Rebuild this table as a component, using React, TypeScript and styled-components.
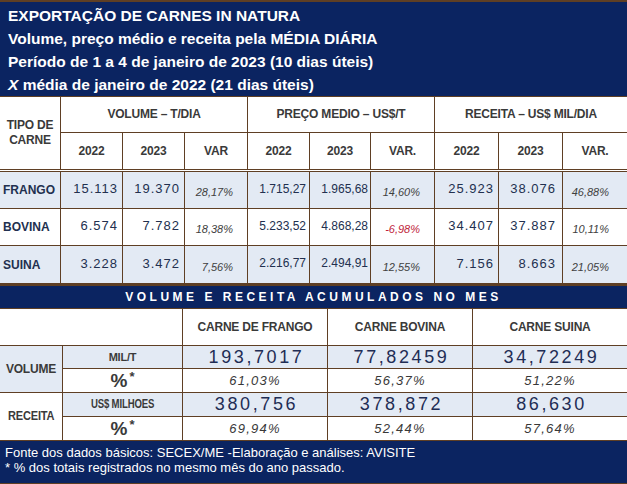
import React from 'react';
import styled, { createGlobalStyle, css } from 'styled-components';

const NAVY = '#0b2461';
const BROWN = '#5f3f24';
const BLUE = '#e3eaf4';
const HEAD = '#3a3a3a';
const INK = '#22304f';

const Global = createGlobalStyle`
  html, body { margin: 0; padding: 0; background: #fff; }
  body { font-family: "Liberation Sans", Arial, sans-serif; }
`;

const Page = styled.div`
  width: 627px;
  height: 484px;
  box-sizing: border-box;
  padding-top: 2px;
  padding-bottom: 1px;
  background: ${BROWN};
  display: flex;
  flex-direction: column;
  gap: 1px;
  overflow: hidden;
`;

const TitleBlock = styled.div`
  height: 94px;
  box-sizing: border-box;
  padding: 2px 0 0 8px;
  background: ${NAVY};
  color: #fff;
  font-weight: bold;
  font-size: 15.5px;
  line-height: 23px;
`;

const TitleLine = styled.div`
  white-space: nowrap;
`;

const Ital = styled.span`
  font-style: italic;
`;

const UpperGrid = styled.div`
  display: grid;
  grid-template-columns: 60px 61px 61px 62px 61px 60px 63px 63px 63px 64px;
  grid-template-rows: 35px 36px 1px 36px 36px 37px;
  gap: 1px;
  background: ${BROWN};
  margin-bottom: 1px;
`;

const LowerGrid = styled.div`
  display: grid;
  grid-template-columns: 62px 119px 144px 144px 154px;
  grid-template-rows: 36px 22px 23px 23px 23px;
  gap: 1px;
  background: ${BROWN};
`;

type Align = 'left' | 'center' | 'right';

const Cell = styled.div<{ $blue?: boolean; $align?: Align; $col?: string; $row?: string; $pr?: number }>`
  background: ${(p) => (p.$blue ? BLUE : '#fff')};
  display: flex;
  align-items: center;
  justify-content: ${(p) => (p.$align === 'left' ? 'flex-start' : p.$align === 'right' ? 'flex-end' : 'center')};
  padding-right: ${(p) => p.$pr ?? 0}px;
  padding-left: ${(p) => (p.$align === 'left' ? 3 : 0)}px;
  box-sizing: border-box;
  white-space: nowrap;
  ${(p) => p.$col && css`grid-column: ${p.$col};`}
  ${(p) => p.$row && css`grid-row: ${p.$row};`}
`;

const Spacer = styled.div`
  grid-column: 1 / -1;
  background: #fff;
`;

const HeadText = styled.span<{ $size?: number }>`
  font-weight: bold;
  font-size: ${(p) => p.$size ?? 12}px;
  color: ${HEAD};
  text-align: center;
  line-height: 15px;
  letter-spacing: -0.2px;
`;

const RowLabel = styled.span`
  font-weight: bold;
  font-size: 12px;
  color: ${INK};
`;

const IntNum = styled.span`
  font-size: 13px;
  letter-spacing: 1px;
  color: ${INK};
  margin-top: -3px;
`;

const PriceNum = styled.span`
  font-size: 12px;
  color: ${INK};
  margin-top: -3px;
`;

const Pct = styled.span<{ $neg?: boolean }>`
  font-size: 11px;
  font-style: italic;
  color: ${(p) => (p.$neg ? '#c0243a' : '#404040')};
  margin-top: 4px;
`;

const Band = styled.div`
  height: 22px;
  background: ${NAVY};
  color: #fff;
  font-weight: bold;
  font-size: 12px;
  letter-spacing: 3.5px;
  display: flex;
  align-items: center;
  justify-content: center;
  padding-left: 0;
  margin-top: 1px;
`;

const Squeeze = styled.span<{ $scale: number }>`
  display: inline-block;
  transform: scaleX(${(p) => p.$scale});
`;

const BigNum = styled.span`
  font-size: 18px;
  letter-spacing: 2.6px;
  color: #1f2d55;
  padding-left: 3px;
`;

const LowPct = styled.span`
  font-size: 13px;
  font-style: italic;
  letter-spacing: 1.2px;
  color: #383838;
`;

const PctMark = styled.span`
  font-weight: bold;
  font-size: 19px;
  color: ${HEAD};
  line-height: 1;
`;

const Star = styled.sup`
  font-size: 13px;
  vertical-align: 6px;
  line-height: 0;
  font-weight: bold;
  margin-left: 2px;
`;

const Footer = styled.div`
  flex: 1;
  background: ${NAVY};
  color: #fff;
  font-size: 13px;
  line-height: 15px;
  padding: 4px 0 0 5px;
`;

type Row = {
  name: string;
  blue: boolean;
  v: [string, string, string];
  p: [string, string, string];
  r: [string, string, string];
  neg?: boolean;
};

const rows: Row[] = [
  { name: 'FRANGO', blue: true, v: ['15.113', '19.370', '28,17%'], p: ['1.715,27', '1.965,68', '14,60%'], r: ['25.923', '38.076', '46,88%'] },
  { name: 'BOVINA', blue: false, v: ['6.574', '7.782', '18,38%'], p: ['5.233,52', '4.868,28', '-6,98%'], r: ['34.407', '37.887', '10,11%'], neg: true },
  { name: 'SUINA', blue: true, v: ['3.228', '3.472', '7,56%'], p: ['2.216,77', '2.494,91', '12,55%'], r: ['7.156', '8.663', '21,05%'] },
];

const years = ['2022', '2023', 'VAR', '2022', '2023', 'VAR.', '2022', '2023', 'VAR.'];

const App: React.FC = () => (
  <>
    <Global />
    <Page>
      <TitleBlock>
        <TitleLine>EXPORTAÇÃO DE CARNES IN NATURA</TitleLine>
        <TitleLine>Volume, preço médio e receita pela MÉDIA DIÁRIA</TitleLine>
        <TitleLine>Período de 1 a 4 de janeiro de 2023 (10 dias úteis)</TitleLine>
        <TitleLine>
          <Ital>X</Ital> média de janeiro de 2022 (21 dias úteis)
        </TitleLine>
      </TitleBlock>

      <UpperGrid>
        <Cell $row="1 / 3" $col="1">
          <HeadText>
            TIPO DE
            <br />
            CARNE
          </HeadText>
        </Cell>
        <Cell $col="2 / 5">
          <HeadText>VOLUME – T/DIA</HeadText>
        </Cell>
        <Cell $col="5 / 8">
          <HeadText>PREÇO MEDIO – US$/T</HeadText>
        </Cell>
        <Cell $col="8 / 11">
          <HeadText>RECEITA – US$ MIL/DIA</HeadText>
        </Cell>
        {years.map((y, i) => (
          <Cell key={i}>
            <HeadText>{y}</HeadText>
          </Cell>
        ))}
        <Spacer />
        {rows.map((r) => (
          <React.Fragment key={r.name}>
            <Cell $blue={r.blue} $align="left">
              <RowLabel>{r.name}</RowLabel>
            </Cell>
            <Cell $blue={r.blue} $align="right" $pr={4}>
              <IntNum>{r.v[0]}</IntNum>
            </Cell>
            <Cell $blue={r.blue} $align="right" $pr={4}>
              <IntNum>{r.v[1]}</IntNum>
            </Cell>
            <Cell $blue={r.blue} $align="right" $pr={14}>
              <Pct>{r.v[2]}</Pct>
            </Cell>
            <Cell $blue={r.blue} $align="right" $pr={3}>
              <PriceNum>{r.p[0]}</PriceNum>
            </Cell>
            <Cell $blue={r.blue} $align="right" $pr={2}>
              <PriceNum>{r.p[1]}</PriceNum>
            </Cell>
            <Cell $blue={r.blue} $align="right" $pr={14}>
              <Pct $neg={r.neg}>{r.p[2]}</Pct>
            </Cell>
            <Cell $blue={r.blue} $align="right" $pr={4}>
              <IntNum>{r.r[0]}</IntNum>
            </Cell>
            <Cell $blue={r.blue} $align="right" $pr={6}>
              <IntNum>{r.r[1]}</IntNum>
            </Cell>
            <Cell $blue={r.blue} $align="right" $pr={18}>
              <Pct>{r.r[2]}</Pct>
            </Cell>
          </React.Fragment>
        ))}
      </UpperGrid>

      <Band>VOLUME E RECEITA ACUMULADOS NO MES</Band>

      <LowerGrid>
        <Cell $col="1 / 3" />
        <Cell>
          <HeadText>CARNE DE FRANGO</HeadText>
        </Cell>
        <Cell>
          <HeadText>CARNE BOVINA</HeadText>
        </Cell>
        <Cell>
          <HeadText>CARNE SUINA</HeadText>
        </Cell>

        <Cell $blue $row="2 / 4" $col="1">
          <HeadText>VOLUME</HeadText>
        </Cell>
        <Cell $blue>
          <HeadText $size={11}>MIL/T</HeadText>
        </Cell>
        <Cell $blue>
          <BigNum>193,7017</BigNum>
        </Cell>
        <Cell $blue>
          <BigNum>77,82459</BigNum>
        </Cell>
        <Cell $blue>
          <BigNum>34,72249</BigNum>
        </Cell>
        <Cell>
          <PctMark>
            %<Star>*</Star>
          </PctMark>
        </Cell>
        <Cell>
          <LowPct>61,03%</LowPct>
        </Cell>
        <Cell>
          <LowPct>56,37%</LowPct>
        </Cell>
        <Cell>
          <LowPct>51,22%</LowPct>
        </Cell>

        <Cell $row="4 / 6" $col="1">
          <HeadText>
            <Squeeze $scale={0.92}>RECEITA</Squeeze>
          </HeadText>
        </Cell>
        <Cell $blue>
          <HeadText $size={12}>
            <Squeeze $scale={0.8}>US$ MILHOES</Squeeze>
          </HeadText>
        </Cell>
        <Cell $blue>
          <BigNum>380,756</BigNum>
        </Cell>
        <Cell $blue>
          <BigNum>378,872</BigNum>
        </Cell>
        <Cell $blue>
          <BigNum>86,630</BigNum>
        </Cell>
        <Cell>
          <PctMark>
            %<Star>*</Star>
          </PctMark>
        </Cell>
        <Cell>
          <LowPct>69,94%</LowPct>
        </Cell>
        <Cell>
          <LowPct>52,44%</LowPct>
        </Cell>
        <Cell>
          <LowPct>57,64%</LowPct>
        </Cell>
      </LowerGrid>

      <Footer>
        Fonte dos dados básicos: SECEX/ME -Elaboração e análises: AVISITE
        <br />* % dos totais registrados no mesmo mês do ano passado.
      </Footer>
    </Page>
  </>
);

export default App;
